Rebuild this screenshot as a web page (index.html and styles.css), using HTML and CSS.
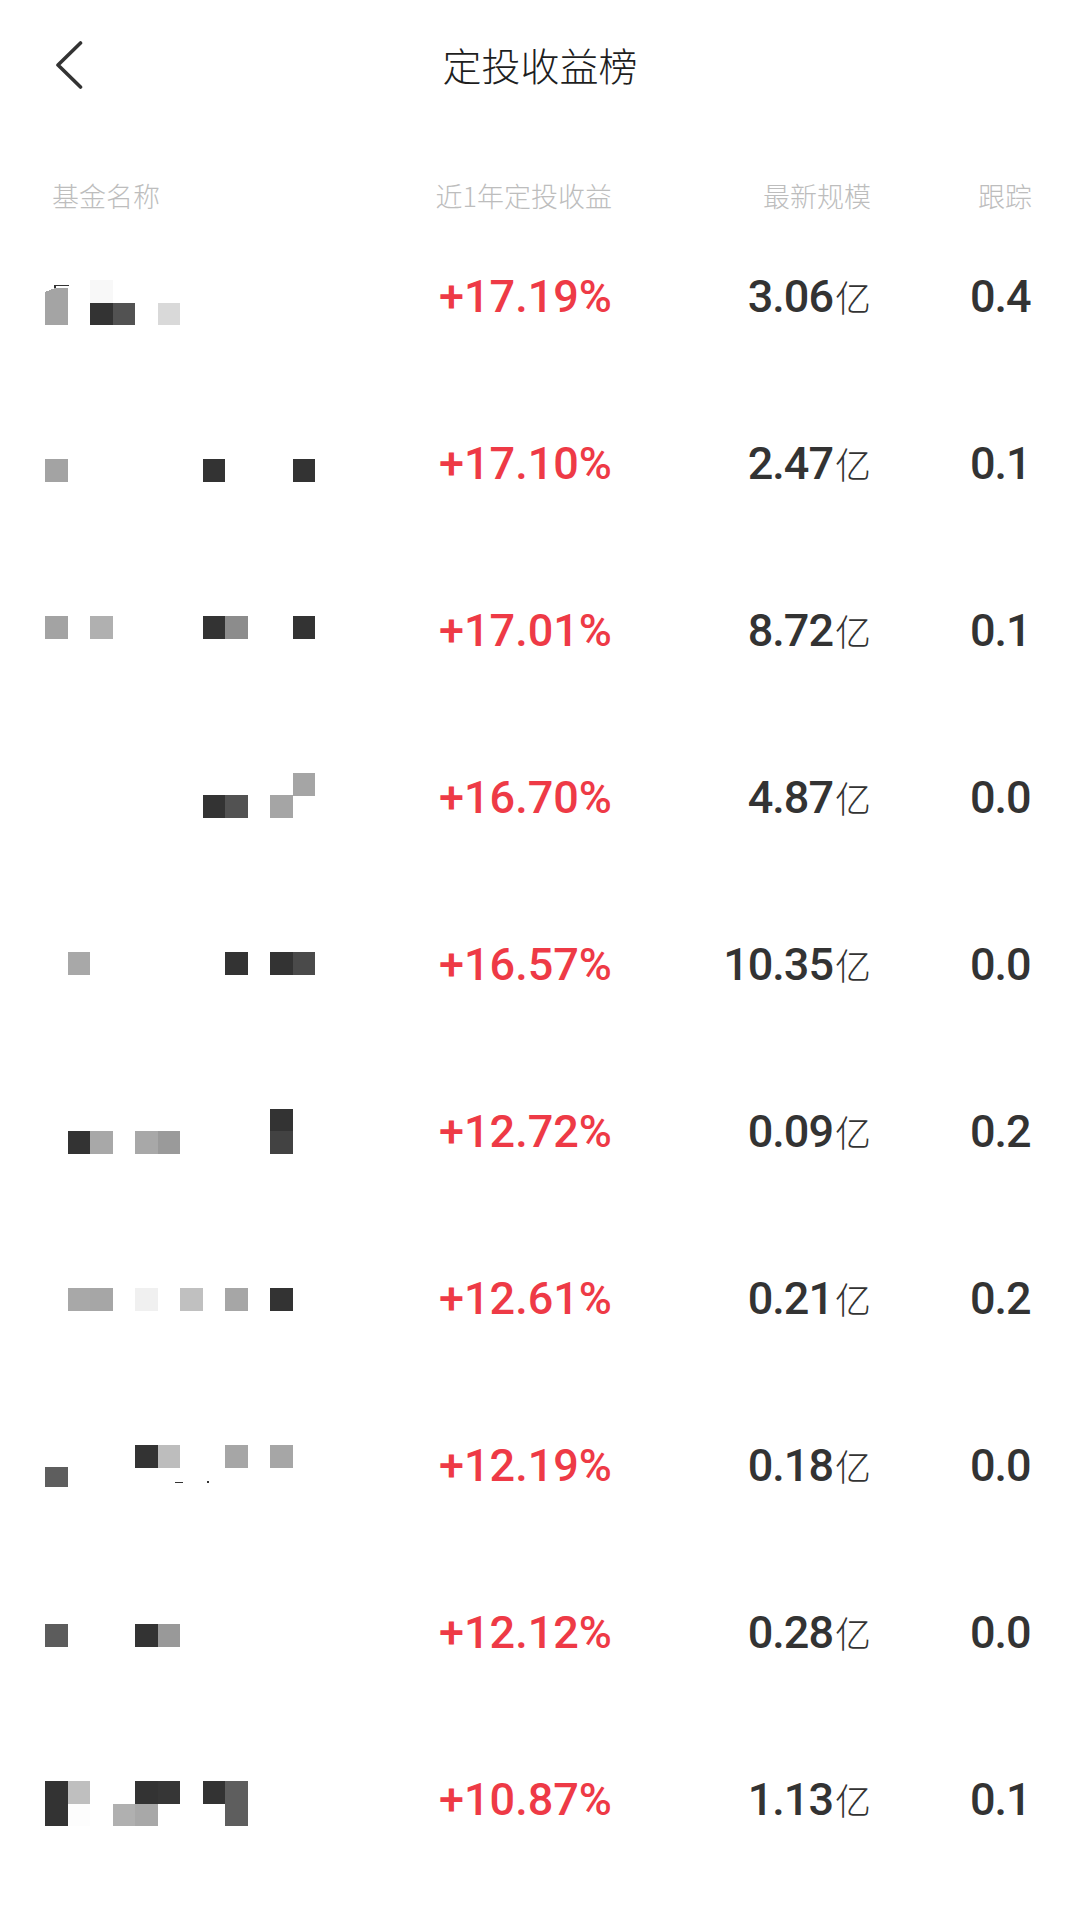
FILE: index.html
```html
<!DOCTYPE html>
<html lang="zh-CN">
<head>
  <meta charset="UTF-8">
  <meta name="viewport" content="width=device-width, initial-scale=1">
  <title>定投收益榜</title>
  <link rel="stylesheet" href="styles.css">
</head>
<body>
  <div class="page">
    <header class="nav">
      <a class="back" href="#">
        <svg viewBox="0 0 28 52" width="28" height="52">
          <polyline points="24.5,4 2,26 24.5,48" />
        </svg>
      </a>
      <h1 class="title">定投收益榜</h1>
      <span></span>
    </header>

    <div class="table">
      <div class="thead row-grid">
        <div class="col-name">基金名称</div>
        <div class="col-rate">近1年定投收益</div>
        <div class="col-scale">最新规模</div>
        <div class="col-track">跟踪</div>
      </div>

      <ul class="tbody">
        <li class="fund row-grid">
          <div class="col-name">
            <svg class="mosaic" viewBox="0 0 272 167" width="272" height="167" shape-rendering="crispEdges">
              <polygon fill="#a4a4a4" points="0,79 10,75 23,75 23,112 0,112" />
              <polyline fill="none" stroke="#333" stroke-width="1.5" points="10,75 10,72.5 24,72.5" />
              <rect x="45" y="67" width="22.5" height="22.5" fill="#f8f8f8" />
              <rect x="45" y="89.5" width="22.5" height="22.5" fill="#333" />
              <rect x="67.5" y="89.5" width="22.5" height="22.5" fill="#525252" />
              <rect x="112.5" y="89.5" width="22.5" height="22.5" fill="#d9d9d9" />
            </svg>
          </div>
          <div class="col-rate rate">+17.19%</div>
          <div class="col-scale num">3.06<span class="unit">亿</span></div>
          <div class="col-track num">0.4</div>
        </li>

        <li class="fund row-grid">
          <div class="col-name">
            <svg class="mosaic" viewBox="0 0 272 167" width="272" height="167" shape-rendering="crispEdges">
              <rect x="0" y="79" width="22.5" height="22.5" fill="#a3a3a3" />
              <rect x="157.5" y="79" width="22.5" height="22.5" fill="#333" />
              <rect x="247.5" y="79" width="22.5" height="22.5" fill="#333" />
            </svg>
          </div>
          <div class="col-rate rate">+17.10%</div>
          <div class="col-scale num">2.47<span class="unit">亿</span></div>
          <div class="col-track num">0.1</div>
        </li>

        <li class="fund row-grid">
          <div class="col-name">
            <svg class="mosaic" viewBox="0 0 272 167" width="272" height="167" shape-rendering="crispEdges">
              <rect x="0" y="69" width="22.5" height="22.5" fill="#a3a3a3" />
              <rect x="45" y="69" width="22.5" height="22.5" fill="#b0b0b0" />
              <rect x="157.5" y="69" width="22.5" height="22.5" fill="#333" />
              <rect x="180" y="69" width="22.5" height="22.5" fill="#8c8c8c" />
              <rect x="247.5" y="69" width="22.5" height="22.5" fill="#333" />
            </svg>
          </div>
          <div class="col-rate rate">+17.01%</div>
          <div class="col-scale num">8.72<span class="unit">亿</span></div>
          <div class="col-track num">0.1</div>
        </li>

        <li class="fund row-grid">
          <div class="col-name">
            <svg class="mosaic" viewBox="0 0 272 167" width="272" height="167" shape-rendering="crispEdges">
              <rect x="247.5" y="59" width="22.5" height="22.5" fill="#a5a5a5" />
              <rect x="157.5" y="81" width="22.5" height="22.5" fill="#333" />
              <rect x="180" y="81" width="22.5" height="22.5" fill="#525252" />
              <rect x="225" y="81" width="22.5" height="22.5" fill="#a5a5a5" />
            </svg>
          </div>
          <div class="col-rate rate">+16.70%</div>
          <div class="col-scale num">4.87<span class="unit">亿</span></div>
          <div class="col-track num">0.0</div>
        </li>

        <li class="fund row-grid">
          <div class="col-name">
            <svg class="mosaic" viewBox="0 0 272 167" width="272" height="167" shape-rendering="crispEdges">
              <rect x="22.5" y="71" width="22.5" height="22.5" fill="#a8a8a8" />
              <rect x="180" y="71" width="22.5" height="22.5" fill="#333" />
              <rect x="225" y="71" width="22.5" height="22.5" fill="#333" />
              <rect x="247.5" y="71" width="22.5" height="22.5" fill="#4a4a4a" />
            </svg>
          </div>
          <div class="col-rate rate">+16.57%</div>
          <div class="col-scale num">10.35<span class="unit">亿</span></div>
          <div class="col-track num">0.0</div>
        </li>

        <li class="fund row-grid">
          <div class="col-name">
            <svg class="mosaic" viewBox="0 0 272 167" width="272" height="167" shape-rendering="crispEdges">
              <rect x="225" y="61" width="22.5" height="22.5" fill="#333" />
              <rect x="22.5" y="83" width="22.5" height="22.5" fill="#333" />
              <rect x="45" y="83" width="22.5" height="22.5" fill="#a8a8a8" />
              <rect x="90" y="83" width="22.5" height="22.5" fill="#a8a8a8" />
              <rect x="112.5" y="83" width="22.5" height="22.5" fill="#9a9a9a" />
              <rect x="225" y="83" width="22.5" height="22.5" fill="#424242" />
            </svg>
          </div>
          <div class="col-rate rate">+12.72%</div>
          <div class="col-scale num">0.09<span class="unit">亿</span></div>
          <div class="col-track num">0.2</div>
        </li>

        <li class="fund row-grid">
          <div class="col-name">
            <svg class="mosaic" viewBox="0 0 272 167" width="272" height="167" shape-rendering="crispEdges">
              <rect x="22.5" y="73" width="22.5" height="22.5" fill="#a8a8a8" />
              <rect x="45" y="73" width="22.5" height="22.5" fill="#a6a6a6" />
              <rect x="90" y="73" width="22.5" height="22.5" fill="#f0f0f0" />
              <rect x="135" y="73" width="22.5" height="22.5" fill="#c0c0c0" />
              <rect x="180" y="73" width="22.5" height="22.5" fill="#a6a6a6" />
              <rect x="225" y="73" width="22.5" height="22.5" fill="#333" />
            </svg>
          </div>
          <div class="col-rate rate">+12.61%</div>
          <div class="col-scale num">0.21<span class="unit">亿</span></div>
          <div class="col-track num">0.2</div>
        </li>

        <li class="fund row-grid">
          <div class="col-name">
            <svg class="mosaic" viewBox="0 0 272 167" width="272" height="167" shape-rendering="crispEdges">
              <rect x="90" y="63" width="22.5" height="22.5" fill="#333" />
              <rect x="112.5" y="63" width="22.5" height="22.5" fill="#bdbdbd" />
              <rect x="180" y="63" width="22.5" height="22.5" fill="#a6a6a6" />
              <rect x="225" y="63" width="22.5" height="22.5" fill="#a6a6a6" />
              <rect x="0" y="85" width="22.5" height="20" fill="#5e5e5e" />
              <rect x="130" y="99.5" width="8" height="1.5" fill="#333" />
              <rect x="162" y="99" width="1.5" height="2" fill="#333" />
            </svg>
          </div>
          <div class="col-rate rate">+12.19%</div>
          <div class="col-scale num">0.18<span class="unit">亿</span></div>
          <div class="col-track num">0.0</div>
        </li>

        <li class="fund row-grid">
          <div class="col-name">
            <svg class="mosaic" viewBox="0 0 272 167" width="272" height="167" shape-rendering="crispEdges">
              <rect x="0" y="75" width="22.5" height="22.5" fill="#5c5c5c" />
              <rect x="90" y="75" width="22.5" height="22.5" fill="#333" />
              <rect x="112.5" y="75" width="22.5" height="22.5" fill="#999" />
            </svg>
          </div>
          <div class="col-rate rate">+12.12%</div>
          <div class="col-scale num">0.28<span class="unit">亿</span></div>
          <div class="col-track num">0.0</div>
        </li>

        <li class="fund row-grid">
          <div class="col-name">
            <svg class="mosaic" viewBox="0 0 272 167" width="272" height="167" shape-rendering="crispEdges">
              <rect x="0" y="65" width="22.5" height="45" fill="#333" />
              <rect x="22.5" y="65" width="22.5" height="22.5" fill="#bfbfbf" />
              <rect x="22.5" y="87.5" width="22.5" height="22.5" fill="#fdfdfd" />
              <rect x="90" y="65" width="22.5" height="22.5" fill="#333" />
              <rect x="112.5" y="65" width="22.5" height="22.5" fill="#363636" />
              <rect x="157.5" y="65" width="22.5" height="22.5" fill="#333" />
              <rect x="180" y="65" width="22.5" height="45" fill="#5e5e5e" />
              <rect x="67.5" y="87.5" width="22.5" height="22.5" fill="#b0b0b0" />
              <rect x="90" y="87.5" width="22.5" height="22.5" fill="#a8a8a8" />
            </svg>
          </div>
          <div class="col-rate rate">+10.87%</div>
          <div class="col-scale num">1.13<span class="unit">亿</span></div>
          <div class="col-track num">0.1</div>
        </li>
      </ul>
    </div>
  </div>
</body>
</html>
```

FILE: styles.css
```css
body {
  margin: 0;
  background: #fff;
  font-family: "Noto Sans CJK SC", "Noto Sans", sans-serif;
  color: #333;
}

.page {
  width: 1080px;
}

/* top bar */
.nav {
  height: 129px;
  display: grid;
  grid-template-columns: 1fr auto 1fr;
  align-items: center;
}

.back {
  display: flex;
  padding-left: 56px;
}

.back polyline {
  fill: none;
  stroke: #333;
  stroke-width: 3.6;
  stroke-linecap: round;
  stroke-linejoin: round;
}

.title {
  margin: 0;
  font-size: 39px;
  font-weight: 300;
  line-height: 1;
  color: #1e1e1e;
}

/* ranking table */
.table {
  margin-left: 45px;
  width: 990px;
}

.row-grid {
  display: grid;
  grid-template-columns: 340px 227px 259px 1fr;
  align-items: center;
  white-space: nowrap;
}

.thead {
  margin-top: 49px;
  height: 35px;
  line-height: 35px;
  font-size: 27px;
  font-weight: 300;
  color: #bdbdbd;
}

.thead .col-name {
  padding-left: 7px;
}

.thead .col-track {
  padding-left: 107px;
}

.col-rate,
.col-scale {
  text-align: right;
}

.tbody {
  list-style: none;
  margin: 0;
  padding: 0;
}

.fund {
  height: 167px;
}

.fund .col-name {
  display: flex;
  height: 167px;
}

.fund .col-track {
  padding-left: 99px;
}

.rate,
.num {
  font-family: Roboto, "Noto Sans CJK SC", sans-serif;
  font-weight: 500;
  font-size: 45px;
  line-height: 1;
}

.rate {
  color: #ee3a46;
}

.num {
  color: #333;
  letter-spacing: -1px;
}

.unit {
  font-family: "Noto Sans CJK SC", sans-serif;
  font-weight: 300;
  font-size: 36px;
  letter-spacing: 0;
  margin-left: 2px;
}
```
